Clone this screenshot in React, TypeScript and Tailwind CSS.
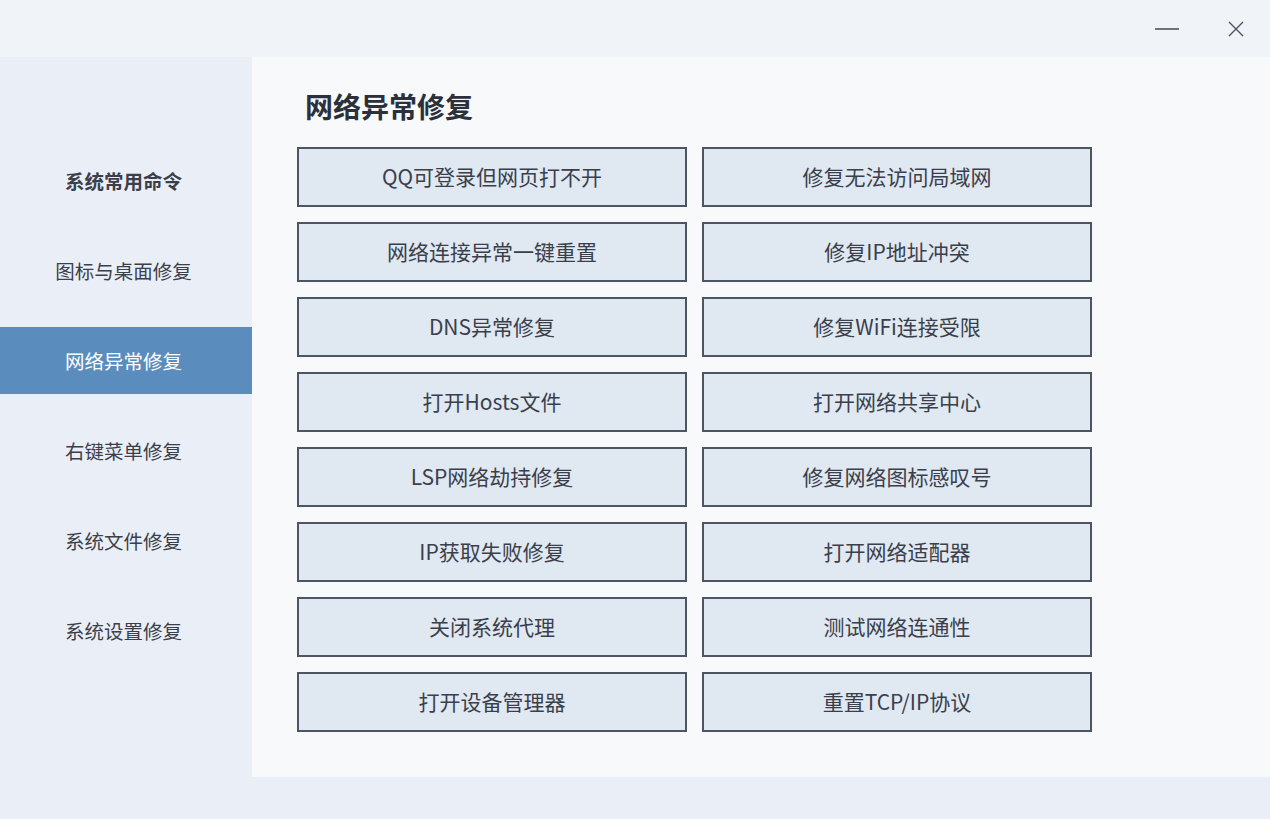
import React, { useState } from "react";

const FONT = '"Noto Sans CJK SC", "Noto Sans", sans-serif';

const navItems = [
  "系统常用命令",
  "图标与桌面修复",
  "网络异常修复",
  "右键菜单修复",
  "系统文件修复",
  "系统设置修复",
];

const actions = [
  "QQ可登录但网页打不开",
  "修复无法访问局域网",
  "网络连接异常一键重置",
  "修复IP地址冲突",
  "DNS异常修复",
  "修复WiFi连接受限",
  "打开Hosts文件",
  "打开网络共享中心",
  "LSP网络劫持修复",
  "修复网络图标感叹号",
  "IP获取失败修复",
  "打开网络适配器",
  "关闭系统代理",
  "测试网络连通性",
  "打开设备管理器",
  "重置TCP/IP协议",
];

export default function App() {
  const [active, setActive] = useState("网络异常修复");

  return (
    <div
      className="w-[1270px] h-[819px] flex flex-col bg-[#eaeff7] overflow-hidden"
      style={{ fontFamily: FONT }}
    >
      {/* Title bar */}
      <div className="h-[57px] shrink-0 bg-[#f0f4f9] flex items-center justify-end">
        <button className="w-[40px] h-[40px] flex items-center justify-center mr-[29px]">
          <svg width="26" height="4" viewBox="0 0 26 4">
            <line x1="1" y1="2" x2="25" y2="2" stroke="#4a5260" strokeWidth="1.6" />
          </svg>
        </button>
        <button className="w-[40px] h-[40px] flex items-center justify-center mr-[14px]">
          <svg width="18" height="18" viewBox="0 0 18 18">
            <path d="M2 2 L16 16 M16 2 L2 16" stroke="#4a5260" strokeWidth="1.4" fill="none" />
          </svg>
        </button>
      </div>

      <div className="flex flex-1">
        {/* Sidebar */}
        <aside className="w-[252px] shrink-0 pt-[90px] flex flex-col gap-[23px]">
          {navItems.map((label, i) => {
            const isActive = label === active;
            return (
              <button
                key={label}
                onClick={() => setActive(label)}
                className={`h-[67px] w-full pr-[5px] flex items-center justify-center text-[19.5px] ${
                  isActive ? "bg-[#5a8cbe] text-white" : "text-[#3a3f4b]"
                } ${i === 0 ? "font-bold" : ""}`}
              >
                {label}
              </button>
            );
          })}
        </aside>

        {/* Main panel */}
        <div className="flex-1 flex flex-col">
          <main className="h-[720px] bg-[#f7f9fb] pt-[31px] pl-[45px]">
            <h1 className="text-[28px] leading-[36px] font-bold text-[#2b303b] pl-[8px] mb-[23px]">
              网络异常修复
            </h1>
            <div className="grid grid-cols-[390px_390px] gap-[15px]">
              {actions.map((a) => (
                <button
                  key={a}
                  className="h-[60px] border-2 border-[#4d5563] bg-[#e0e8f2] text-[21px] text-[#3a3f4b] flex items-center justify-center"
                >
                  {a}
                </button>
              ))}
            </div>
          </main>
        </div>
      </div>
    </div>
  );
}
